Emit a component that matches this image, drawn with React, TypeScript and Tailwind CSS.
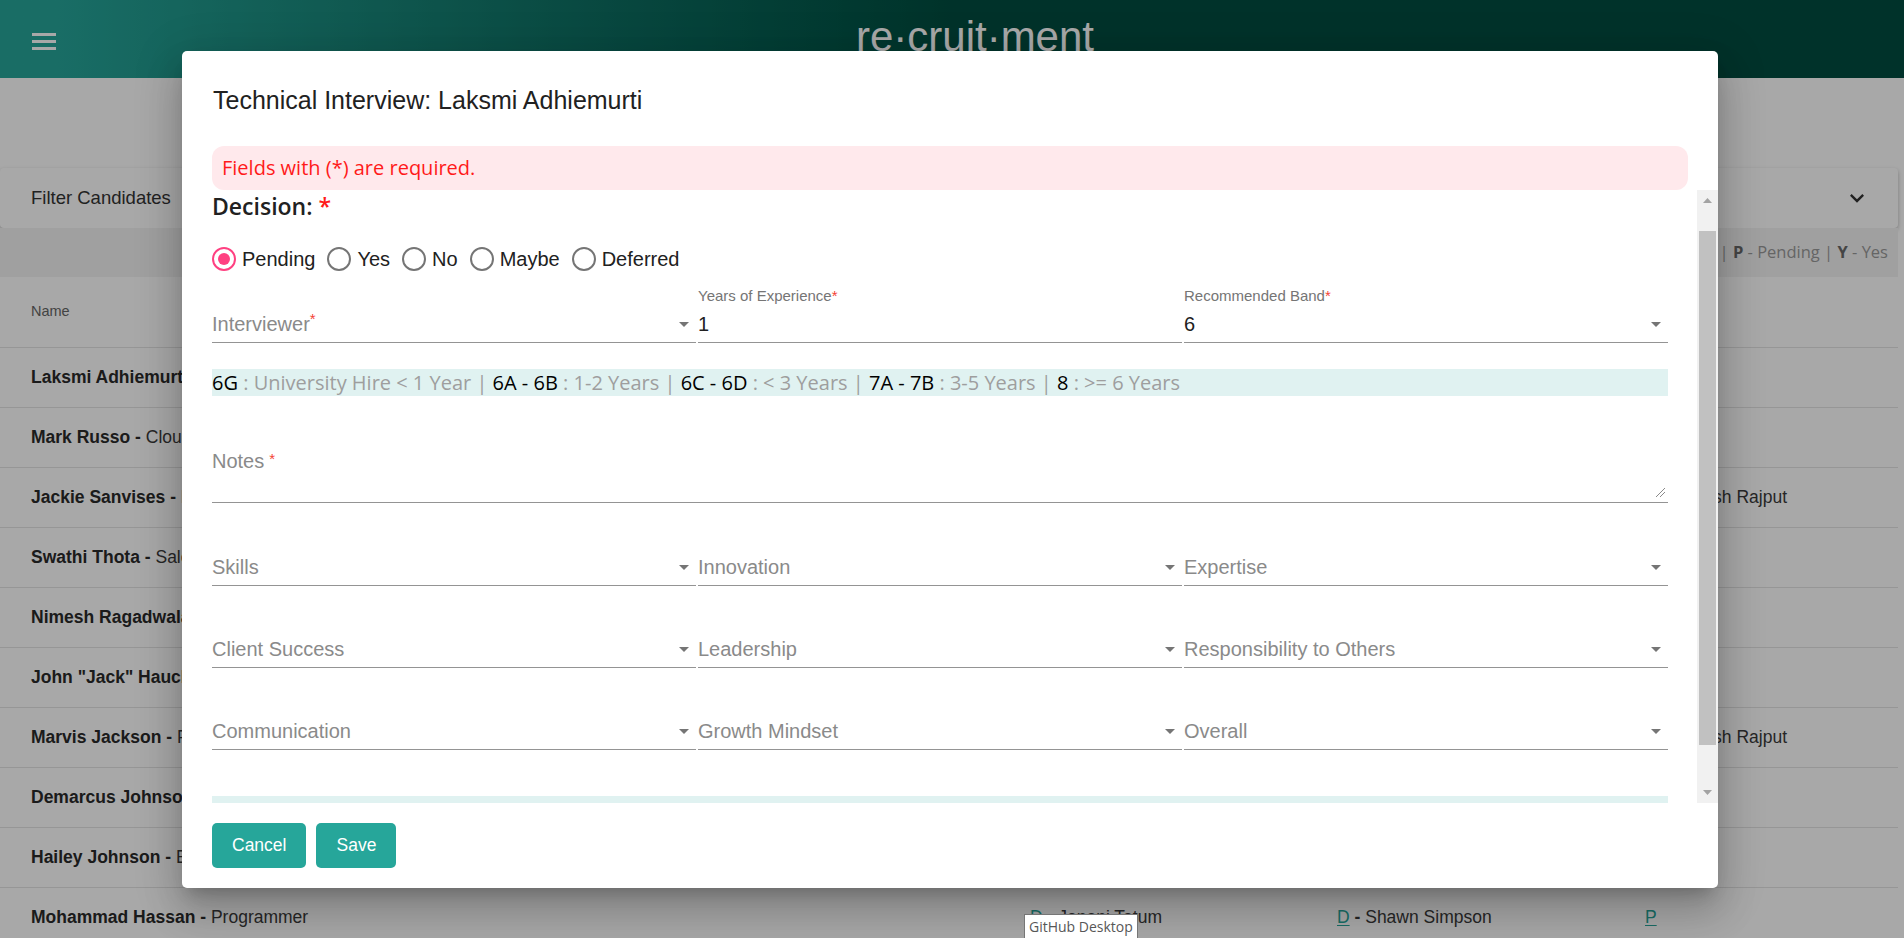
import React from 'react';

type Vote = { l: string; who?: string };
type Row = { name: string; role: string; c2?: Vote; c3?: Vote; c4?: Vote };

const rows: Row[] = [
  { name: 'Laksmi Adhiemurti', role: 'Software Engineer', c2: { l: 'P', who: 'Shawn Simpson' }, c4: { l: 'P' } },
  { name: 'Mark Russo', role: 'Cloud Architect', c2: { l: 'Y', who: 'Janani Tatum' } },
  { name: 'Jackie Sanvises', role: 'Business Analyst', c2: { l: 'Y', who: 'Shawn Simpson' }, c4: { l: 'Y', who: 'Rakesh Rajput' } },
  { name: 'Swathi Thota', role: 'Sales Engineer' },
  { name: 'Nimesh Ragadwala', role: 'Data Engineer', c3: { l: 'M', who: 'Janani Tatum' } },
  { name: 'John "Jack" Hauck', role: 'Project Manager' },
  { name: 'Marvis Jackson', role: 'Programmer', c3: { l: 'Y', who: 'Shawn Simpson' }, c4: { l: 'Y', who: 'Rakesh Rajput' } },
  { name: 'Demarcus Johnson', role: 'QA Engineer' },
  { name: 'Hailey Johnson', role: 'Business Analyst' },
  { name: 'Mohammad Hassan', role: 'Programmer', c2: { l: 'D', who: 'Janani Tatum' }, c3: { l: 'D', who: 'Shawn Simpson' }, c4: { l: 'P' } },
];

const decisions = ['Pending', 'Yes', 'No', 'Maybe', 'Deferred'];

// band hint: [code, description]
const bands: [string, string][] = [
  ['6G', 'University Hire < 1 Year'],
  ['6A - 6B', '1-2 Years'],
  ['6C - 6D', '< 3 Years'],
  ['7A - 7B', '3-5 Years'],
  ['8', '>= 6 Years'],
];

function VoteCell({ v }: { v?: Vote }) {
  if (!v) return <div />;
  return (
    <div className="text-[17.5px] text-[#3a3a3a]">
      <span className="text-[#26a69a] underline underline-offset-2">{v.l}</span>
      {v.who && <span className="font-bold"> - </span>}
      {v.who}
    </div>
  );
}

function DropArrow() {
  return (
    <svg width="24" height="24" viewBox="0 0 24 24" className="shrink-0">
      <path d="M7 10l5 5 5-5z" fill="#757575" />
    </svg>
  );
}

function Radio({ label, checked }: { label: string; checked?: boolean }) {
  return (
    <label className="mr-[12px] flex items-center gap-[6px]">
      <span
        className={`flex h-[24px] w-[24px] items-center justify-center rounded-full border-[2.5px] ${
          checked ? 'border-[#ff4081]' : 'border-[#757575]'
        }`}
      >
        {checked && <span className="h-[12px] w-[12px] rounded-full bg-[#ff4081]" />}
      </span>
      <span>{label}</span>
    </label>
  );
}

function SelectField({ label, small, value, arrow = true, top = false }: {
  label?: string; small?: string; value?: string; arrow?: boolean; top?: boolean;
}) {
  return (
    <div className="flex flex-col">
      {top && (
        <div className="h-[20px] text-[15px] leading-[20px] text-[#757575]">
          {small}
          {small && <span className="text-[#f44336]">*</span>}
        </div>
      )}
      <div className="flex h-[37px] items-center justify-between border-b border-[#949494]">
        {value ? (
          <span className="text-[20px] text-[#212121]">{value}</span>
        ) : (
          <span className="text-[20px] text-[#8a8a8a]">
            {label}
            {label === 'Interviewer' && <sup className="text-[15px] text-[#f44336]">*</sup>}
          </span>
        )}
        {arrow && <DropArrow />}
      </div>
    </div>
  );
}

export default function App() {
  return (
    <div className="relative h-[938px] w-[1904px] overflow-hidden bg-white font-['Liberation_Sans',Arial,sans-serif]">
      {/* page behind the dialog */}
      <header className="flex h-[78px] bg-linear-to-r from-[#26a69a] from-3% to-[#004d40] to-50%">
        <div className="flex flex-col gap-[4.5px] pl-[32px] pt-[33px]">
          <span className="block h-[2.5px] w-[24px] bg-white" />
          <span className="block h-[2.5px] w-[24px] bg-white" />
          <span className="block h-[2.5px] w-[24px] bg-white" />
        </div>
        <div className="flex-1 pr-[10px] pt-[16px] text-center text-[42px] leading-[42px] text-white">re·cruit·ment</div>
      </header>

      <main className="pt-[90px]">
        <div className="flex h-[60px] w-[1898px] items-center justify-between rounded-[4px] bg-white pl-[31px] pr-[27px] shadow-[0_2px_4px_rgba(0,0,0,0.28)]">
          <span className="text-[18.5px] text-[#333]">Filter Candidates</span>
          <svg width="28" height="28" viewBox="0 0 24 24">
            <path d="M16.59 8.59L12 13.17 7.41 8.59 6 10l6 6 6-6z" fill="#333" />
          </svg>
        </div>

        <div className="flex h-[49px] w-[1898px] items-center justify-end bg-[#f3f3f3] pr-[10px] font-['Open_Sans',sans-serif] text-[16.5px] text-[#9a9a9a]">
          <b className="text-[#6a6a6a]">D</b>&nbsp;- Deferred |&nbsp;<b className="text-[#6a6a6a]">M</b>&nbsp;- Maybe |&nbsp;
          <b className="text-[#6a6a6a]">N</b>&nbsp;- No |&nbsp;<b className="text-[#6a6a6a]">P</b>&nbsp;- Pending |&nbsp;
          <b className="text-[#6a6a6a]">Y</b>&nbsp;- Yes
        </div>

        <div className="w-[1898px] bg-white">
          <div className="flex h-[71px] items-center border-b border-[#e4e4e4] pl-[31px] text-[14.5px] text-[#666]">Name</div>
          {rows.map(r => (
            <div
              key={r.name}
              className="grid h-[60px] grid-cols-[999px_307px_308px_1fr] items-center border-b border-[#e4e4e4] pl-[31px]"
            >
              <div className="text-[17.5px] text-[#3a3a3a]">
                <span className="font-bold text-[#2a2a2a]">{r.name} - </span>
                {r.role}
              </div>
              <VoteCell v={r.c2} />
              <VoteCell v={r.c3} />
              <VoteCell v={r.c4} />
            </div>
          ))}
        </div>
      </main>

      {/* backdrop */}
      <div className="absolute inset-0 bg-black/[0.34]" />

      {/* dialog */}
      <div className="absolute left-[182px] top-[51px] flex h-[837px] w-[1536px] flex-col rounded-[5px] bg-white shadow-[0_11px_15px_-7px_rgba(0,0,0,0.2),0_24px_38px_3px_rgba(0,0,0,0.14),0_9px_46px_8px_rgba(0,0,0,0.12)]">
        <h2 className="pb-[31px] pl-[31px] pt-[34px] text-[25px] leading-[30px] text-[#212121]">
          Technical Interview: Laksmi Adhiemurti
        </h2>

        <div className="mx-[30px] flex h-[44px] items-center rounded-[12px] bg-[#ffe9ec] pl-[10px] font-['Open_Sans',sans-serif] text-[20px] text-[#ff1a1a]">
          Fields with (*) are required.
        </div>

        <div className="flex h-[613px]">
          <div className="w-[1486px] overflow-hidden pl-[30px]">
            <div className="w-[1456px]">
              <div className="font-['Open_Sans',sans-serif] text-[23px] font-semibold leading-[32px] text-[#212121]">
                Decision: <span className="text-[#ff1a1a]">*</span>
              </div>

              <div className="mt-[17px] flex h-[40px] items-center text-[20px] text-[#212121]">
                {decisions.map((d, i) => (
                  <Radio key={d} label={d} checked={i === 0} />
                ))}
              </div>

              <div className="grid grid-cols-3 items-end gap-x-[2px] pt-[7px]">
                <SelectField top label="Interviewer" />
                <SelectField top small="Years of Experience" value="1" arrow={false} />
                <SelectField top small="Recommended Band" value="6" />
              </div>

              <div className="mt-[26px] flex h-[27px] items-center bg-[#e0f2f1] font-['Open_Sans',sans-serif] text-[20px] text-[#9e9e9e]">
                {bands.map(([code, desc], i) => (
                  <span key={code} className="whitespace-pre">
                    <span className="text-black">{code}</span>
                    {` : ${desc}`}
                    {i < bands.length - 1 && ' | '}
                  </span>
                ))}
              </div>

              <div className="mt-[54px] border-b border-[#949494]">
                <div className="flex h-[22px] items-start gap-[5px] text-[20px] leading-[22px] text-[#8a8a8a]">
                  <span>Notes</span>
                  <span className="text-[15px] leading-[18px] text-[#f44336]">*</span>
                </div>
                <div className="flex h-[30px] items-end justify-end pb-[4px] pr-[2px]">
                  <svg width="11" height="11" viewBox="0 0 11 11">
                    <path d="M10 1L1 10M10 5L5 10" stroke="#8a8a8a" strokeWidth="1" />
                  </svg>
                </div>
              </div>

              <div className="mt-[46px] grid grid-cols-3 gap-x-[2px]">
                <SelectField label="Skills" />
                <SelectField label="Innovation" />
                <SelectField label="Expertise" />
              </div>
              <div className="mt-[45px] grid grid-cols-3 gap-x-[2px]">
                <SelectField label="Client Success" />
                <SelectField label="Leadership" />
                <SelectField label="Responsibility to Others" />
              </div>
              <div className="mt-[45px] grid grid-cols-3 gap-x-[2px]">
                <SelectField label="Communication" />
                <SelectField label="Growth Mindset" />
                <SelectField label="Overall" />
              </div>

              <div className="mt-[46px] h-[27px] bg-[#e0f2f1]" />
            </div>
          </div>

          <div className="flex-1" />

          {/* scrollbar */}
          <div className="flex w-[21px] flex-col bg-[#f1f1f1]">
            <div className="flex h-[21px] items-center justify-center">
              <svg width="9" height="5" viewBox="0 0 9 5"><path d="M0 5L4.5 0 9 5z" fill="#a3a3a3" /></svg>
            </div>
            <div className="mx-[2px] mt-[20px] h-[514px] bg-[#c1c1c1]" />
            <div className="flex-1" />
            <div className="flex h-[21px] items-center justify-center">
              <svg width="9" height="5" viewBox="0 0 9 5"><path d="M0 0L4.5 5 9 0z" fill="#a3a3a3" /></svg>
            </div>
          </div>
        </div>

        <div className="flex gap-[10px] pl-[30px] pt-[20px]">
          <button className="h-[45px] rounded-[5px] bg-[#26a69a] px-[20px] text-[17.5px] text-white">Cancel</button>
          <button className="h-[45px] rounded-[5px] bg-[#26a69a] px-[20px] text-[17.5px] text-white">Save</button>
        </div>
      </div>

      {/* OS tooltip */}
      <div className="absolute left-[1024px] top-[914px] border border-[#767676] bg-white px-[4px] pb-[3px] pt-[1px] font-['Open_Sans',sans-serif] text-[14px] text-[#575757]">
        GitHub Desktop
      </div>
    </div>
  );
}
